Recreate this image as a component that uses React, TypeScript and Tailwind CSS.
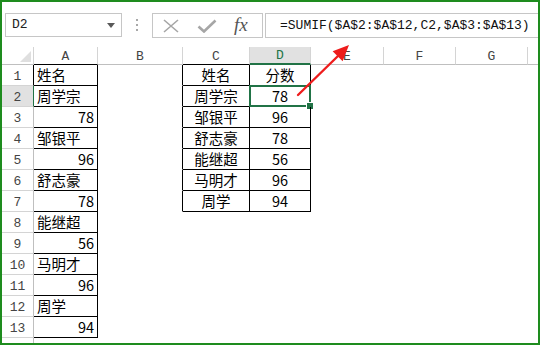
import React from "react";

type Cell = { t?: string; align?: "l" | "r" | "c" };

const colDefs = [
  { k: "A", w: "w-[64px]" },
  { k: "B", w: "w-[85px]" },
  { k: "C", w: "w-[67px]" },
  { k: "D", w: "w-[61px]" },
  { k: "E", w: "w-[73px]" },
  { k: "F", w: "w-[72px]" },
  { k: "G", w: "w-[72px]" },
];

const colA: Cell[] = [
  { t: "姓名", align: "l" },
  { t: "周学宗", align: "l" },
  { t: "78", align: "r" },
  { t: "邹银平", align: "l" },
  { t: "96", align: "r" },
  { t: "舒志豪", align: "l" },
  { t: "78", align: "r" },
  { t: "能继超", align: "l" },
  { t: "56", align: "r" },
  { t: "马明才", align: "l" },
  { t: "96", align: "r" },
  { t: "周学", align: "l" },
  { t: "94", align: "r" },
];

const colC = ["姓名", "周学宗", "邹银平", "舒志豪", "能继超", "马明才", "周学"];
const colD = ["分数", "78", "96", "78", "56", "96", "94"];

const cjk = { fontFamily: '"Noto Sans CJK SC", "Noto Sans", sans-serif' };
const mono = { fontFamily: '"Liberation Mono", "DejaVu Sans Mono", monospace' };

function cellContent(r: number, c: number): Cell {
  if (c === 0) return colA[r];
  if (c === 2 && r < 7) return { t: colC[r], align: "c" };
  if (c === 3 && r < 7) return { t: colD[r], align: "c" };
  return {};
}

function rightBlack(r: number, c: number) {
  if (c === 0) return true;
  if (r < 7 && (c === 1 || c === 2 || c === 3)) return true;
  return false;
}
function bottomBlack(r: number, c: number) {
  if (c === 0) return true;
  if (r < 7 && (c === 2 || c === 3)) return true;
  return false;
}

export default function App() {
  const rows = Array.from({ length: 13 }, (_, i) => i);
  return (
    <div className="relative w-[540px] h-[345px] overflow-hidden bg-white">
      <div className="w-full h-full border-2 border-[#1e8c1e] flex flex-col bg-white">
        {/* toolbar */}
        <div className="h-[45px] shrink-0 flex items-start pt-[11px] pl-[3px]">
          <div className="w-[117px] h-[24px] border border-[#c6c6c6] flex items-center justify-between pl-[6px] pr-[6px]">
            <span className="text-[13px] text-[#222]" style={mono}>
              D2
            </span>
            <svg width="8" height="5" viewBox="0 0 8 5">
              <path d="M0 0 L8 0 L4 5 Z" fill="#595959" />
            </svg>
          </div>
          <div className="w-[30px] h-[24px] flex flex-col items-center justify-center gap-[3px]">
            <div className="w-[2px] h-[2px] bg-[#a8a8a8]" />
            <div className="w-[2px] h-[2px] bg-[#a8a8a8]" />
            <div className="w-[2px] h-[2px] bg-[#a8a8a8]" />
          </div>
          <div className="w-[111px] h-[25px] border border-[#c6c6c6] flex items-center pl-[9px] gap-[17px]">
            <svg width="18" height="14" viewBox="0 0 18 14">
              <path d="M2 1 L16 13 M16 1 L2 13" stroke="#a6a6a6" strokeWidth="1.6" fill="none" />
            </svg>
            <svg width="20" height="14" viewBox="0 0 20 14">
              <path d="M1.5 7.5 L7 12.5 L18.5 1.5" stroke="#a6a6a6" strokeWidth="2.6" fill="none" />
            </svg>
            <span
              className="text-[19px] italic leading-none text-[#555] -mt-[2px]"
              style={{ fontFamily: '"Liberation Serif", "DejaVu Serif", serif' }}
            >
              fx
            </span>
          </div>
          <div className="flex-1 h-[25px] ml-[2px] border border-r-0 border-[#c6c6c6] flex items-center pl-[14px]">
            <span className="text-[13px] text-[#111] whitespace-nowrap" style={mono}>
              =SUMIF($A$2:$A$12,C2,$A$3:$A$13)
            </span>
          </div>
        </div>

        {/* column header row */}
        <div className="flex h-[18px] shrink-0">
          <div className="w-[32px] h-full border-r border-r-[#d4d4d4] border-b border-b-[#bfbfbf] relative">
            <svg className="absolute right-[2px] bottom-[2px]" width="11" height="11" viewBox="0 0 11 11">
              <path d="M11 0 L11 11 L0 11 Z" fill="#dfdfdf" />
            </svg>
          </div>
          {colDefs.map((c, i) => {
            const sel = c.k === "D";
            const bottom = sel
              ? "border-b-2 border-b-[#217346]"
              : i === 0 || i === 2
              ? "border-b border-b-black"
              : "border-b border-b-[#bfbfbf]";
            return (
              <div
                key={c.k}
                className={`${c.w} h-full border-r border-r-[#d4d4d4] ${bottom} ${
                  sel ? "bg-[#e1e1e1] text-[#217346]" : "bg-white text-[#444]"
                } flex items-end justify-center text-[13px] leading-[15px]`}
                style={mono}
              >
                {c.k}
              </div>
            );
          })}
          <div className="flex-1 h-full border-b border-b-[#bfbfbf]" />
        </div>

        {/* rows */}
        {rows.map((r) => {
          const rowSel = r === 1;
          const hdrRight =
            r === 0 ? "border-r-black" : rowSel ? "border-r-[#217346]" : "border-r-[#bfbfbf]";
          return (
            <div key={r} className="flex h-[21px] shrink-0">
              <div
                className={`w-[32px] h-full border-r border-b border-b-[#d4d4d4] ${hdrRight} ${
                  rowSel ? "bg-[#e1e1e1]" : "bg-white"
                } flex items-end justify-center pb-[1px] text-[13px] leading-[15px] text-[#444]`}
                style={mono}
              >
                {r + 1}
              </div>
              {colDefs.map((c, ci) => {
                const cell = cellContent(r, ci);
                const rb = rightBlack(r, ci) ? "border-r-black" : "border-r-transparent";
                const bb = bottomBlack(r, ci) ? "border-b-black" : "border-b-transparent";
                const just =
                  cell.align === "l"
                    ? "justify-start pl-[3px]"
                    : cell.align === "r"
                    ? "justify-end pr-[3px]"
                    : "justify-center";
                const isD2 = r === 1 && ci === 3;
                return (
                  <div
                    key={c.k}
                    className={`${c.w} h-full border-r border-b ${rb} ${bb} flex items-center ${just} text-[14.5px] leading-[20px] text-black relative`}
                    style={cjk}
                  >
                    {cell.t}
                    {isD2 && (
                      <div className="absolute -left-[1px] -top-[1px] -right-[1px] -bottom-[1px] border-2 border-[#217346]">
                        <div className="absolute -right-[4px] -bottom-[4px] w-[6px] h-[6px] bg-[#217346] outline outline-1 outline-white" />
                      </div>
                    )}
                  </div>
                );
              })}
              <div className="flex-1 h-full" />
            </div>
          );
        })}
        <div className="flex flex-1">
          <div className="w-[32px] h-full border-r border-r-[#bfbfbf]" />
          <div className="flex-1" />
        </div>
      </div>

      {/* red arrow annotation */}
      <svg className="absolute left-0 top-0 pointer-events-none" width="540" height="345" viewBox="0 0 540 345">
        <line x1="298" y1="95" x2="338" y2="56" stroke="#ee1c1c" strokeWidth="2.4" strokeLinecap="round" />
        <path d="M349 45 L342.6 61.2 L332.6 51.2 Z" fill="#ee1c1c" />
      </svg>
    </div>
  );
}
